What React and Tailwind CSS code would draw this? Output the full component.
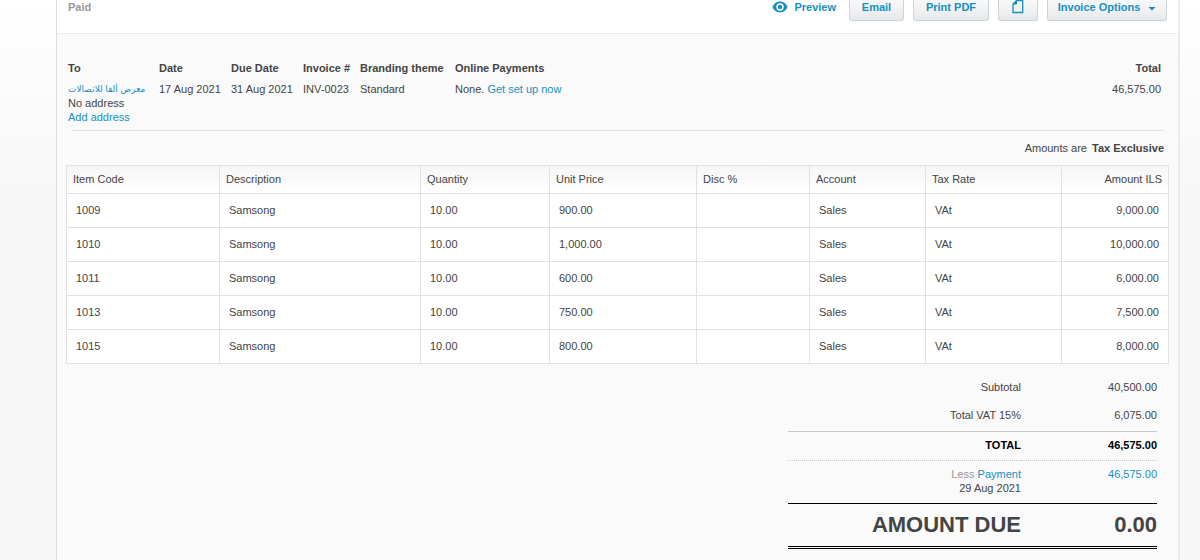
import clsx from 'clsx';

const details = [
  { label: 'Date', value: '17 Aug 2021', width: 'w-[72px]' },
  { label: 'Due Date', value: '31 Aug 2021', width: 'w-[72px]' },
  { label: 'Invoice #', value: 'INV-0023', width: 'w-[57px]' },
  { label: 'Branding theme', value: 'Standard', width: 'w-[95px]' },
];

const columns = [
  { label: 'Item Code', width: 'w-[153px]' },
  { label: 'Description', width: 'w-[201px]' },
  { label: 'Quantity', width: 'w-[129px]' },
  { label: 'Unit Price', width: 'w-[147px]' },
  { label: 'Disc %', width: 'w-[113px]' },
  { label: 'Account', width: 'w-[116px]' },
  { label: 'Tax Rate', width: 'w-[136px]' },
  { label: 'Amount ILS', width: 'w-[107px]' },
];

const items = [
  ['1009', 'Samsong', '10.00', '900.00', '', 'Sales', 'VAt', '9,000.00'],
  ['1010', 'Samsong', '10.00', '1,000.00', '', 'Sales', 'VAt', '10,000.00'],
  ['1011', 'Samsong', '10.00', '600.00', '', 'Sales', 'VAt', '6,000.00'],
  ['1013', 'Samsong', '10.00', '750.00', '', 'Sales', 'VAt', '7,500.00'],
  ['1015', 'Samsong', '10.00', '800.00', '', 'Sales', 'VAt', '8,000.00'],
];

const buttonCls =
  'flex h-[21px] items-start justify-center rounded-b-[3px] border border-t-0 border-[#cfd3d6] bg-linear-to-b from-[#f8f9fa] to-[#e6e9eb] font-bold text-[#1690c0]';

function EyeIcon() {
  return (
    <svg viewBox="0 0 16 12" className="h-3 w-4" aria-hidden="true">
      <path d="M8 .6C4.600.6 1.700 2.800.5 6c1.200 3.200 4.100 5.400 7.500 5.400S14.300 9.200 15.500 6C14.300 2.800 11.400.6 8 .6z" fill="#1690c0" />
      <circle cx="8" cy="6" r="3.700" fill="#fff" />
      <circle cx="8" cy="6" r="2.200" fill="#1690c0" />
    </svg>
  );
}

function FileIcon() {
  return (
    <svg viewBox="0 0 12 14" className="h-[14px] w-3" fill="none" stroke="#1690c0" aria-hidden="true">
      <path d="M4.500.5h6.200v12H1V4z" strokeWidth="1.300" />
      <path d="M4.500.5V4H1z" fill="#1690c0" />
    </svg>
  );
}

function Toolbar() {
  return (
    <header className="flex h-[34px] items-start justify-between border-b border-[#ebebeb] bg-white pr-[11px] pl-[11px]">
      <span className="font-bold text-[#999]">Paid</span>
      <div className="flex items-start">
        <a href="#preview" className="mr-[13px] flex items-center gap-[6px] font-bold text-[#1690c0]">
          <EyeIcon />
          Preview
        </a>
        <div className="flex gap-[9px]">
          <button type="button" className={clsx(buttonCls, 'w-[55px]')}>Email</button>
          <button type="button" className={clsx(buttonCls, 'w-[76px]')}>Print PDF</button>
          <button type="button" aria-label="Files" className={clsx(buttonCls, 'w-10')}>
            <FileIcon />
          </button>
          <button type="button" className={clsx(buttonCls, 'w-[120px] gap-2')}>
            Invoice Options
            <svg viewBox="0 0 8 14" className="h-[14px] w-2" fill="#1690c0" aria-hidden="true">
              <path d="M.5 7h7L4 10.500z" />
            </svg>
          </button>
        </div>
      </div>
    </header>
  );
}

function InvoiceDetails() {
  return (
    <table className="w-full table-fixed text-left">
      <thead>
        <tr className="h-[21px] align-top">
          <th className="w-[91px]">To</th>
          {details.map(d => <th key={d.label} className={d.width}>{d.label}</th>)}
          <th>Online Payments</th>
          <th className="w-20 text-right">Total</th>
        </tr>
      </thead>
      <tbody>
        <tr className="h-[42px] align-top whitespace-nowrap">
          <td>
            <a href="#contact" dir="rtl" lang="ar" className="block w-[82px] text-[9px] leading-[14px] text-[#1690c0]">معرض ألفا للاتصالات</a>
            <span className="block">No address</span>
            <a href="#address" className="block text-[#1690c0]">Add address</a>
          </td>
          {details.map(d => <td key={d.label}>{d.value}</td>)}
          <td>None. <a href="#payments" className="text-[#1690c0]">Get set up now</a></td>
          <td className="text-right">46,575.00</td>
        </tr>
      </tbody>
    </table>
  );
}

function LineItems() {
  return (
    <table className="w-full table-fixed border-collapse border border-[#e2e2e2] bg-white text-left">
      <thead>
        <tr className="h-7 bg-linear-to-b from-[#f6f6f6] to-white">
          {columns.map((c, i) => (
            <th key={c.label} className={clsx('border border-[#e2e2e2] px-[6px] pb-[2px] font-normal', c.width, i === 7 && 'text-right')}>{c.label}</th>
          ))}
        </tr>
      </thead>
      <tbody>
        {items.map(row => (
          <tr key={row[0]} className="h-[34px]">
            {row.map((cell, i) => (
              <td key={i} className={clsx('border border-[#e2e2e2] px-[9px] pb-[2px]', i === 7 && 'text-right')}>{cell}</td>
            ))}
          </tr>
        ))}
      </tbody>
    </table>
  );
}

function Totals() {
  return (
    <table className="w-[369px] table-fixed border-collapse text-right">
      <tbody>
        <tr className="h-7">
          <th className="w-[233px] font-normal">Subtotal</th>
          <td>40,500.00</td>
        </tr>
        <tr className="h-[30px]">
          <th className="pb-[2px] font-normal">Total VAT 15%</th>
          <td className="pb-[2px]">6,075.00</td>
        </tr>
        <tr className="h-[29px] border-t border-[#c8c8c8] font-bold text-black">
          <th className="pb-[2px]">TOTAL</th>
          <td className="pb-[2px]">46,575.00</td>
        </tr>
        <tr className="h-[43px] border-t border-dotted border-[#c8c8c8] align-top">
          <th className="pt-[6px] font-normal">
            <span className="text-[#999]">Less </span>
            <a href="#payment" className="text-[#1690c0]">Payment</a>
            <span className="block">29 Aug 2021</span>
          </th>
          <td className="pt-[6px] text-[#1690c0]">46,575.00</td>
        </tr>
        <tr className="h-[44px] border-t border-b-3 border-t-black border-b-black text-[22px] [border-bottom-style:double]">
          <th>AMOUNT DUE</th>
          <td className="font-bold">0.00</td>
        </tr>
      </tbody>
    </table>
  );
}

export default function App() {
  return (
    <div className="min-h-screen bg-[#f7f7f7] bg-linear-to-b from-white to-[#f7f7f7] to-[200px] pr-5 pl-14 font-['Liberation_Sans',Arial,'DejaVu_Sans',sans-serif] text-[11px] leading-[14px] text-[#444]">
      <main className="min-h-screen border-r-2 border-l border-r-[#ebebeb] border-l-[#dcdcdc] bg-[#fafafa]">
        <Toolbar />
        <section className="pt-[27px] pr-[17px] pl-[11px]">
          <InvoiceDetails />
        </section>
        <div className="mr-[14px] ml-[14px] mt-[6px] border-t border-[#e2e2e2]" />
        <p className="mt-[10px] mr-[14px] mb-[10px] text-right">
          Amounts are <strong className="ml-[2px]">Tax Exclusive</strong>
        </p>
        <div className="pr-[9px] pl-[9px]">
          <LineItems />
        </div>
        <div className="flex justify-end pt-[9px] pr-[21px] pb-3">
          <Totals />
        </div>
      </main>
    </div>
  );
}
